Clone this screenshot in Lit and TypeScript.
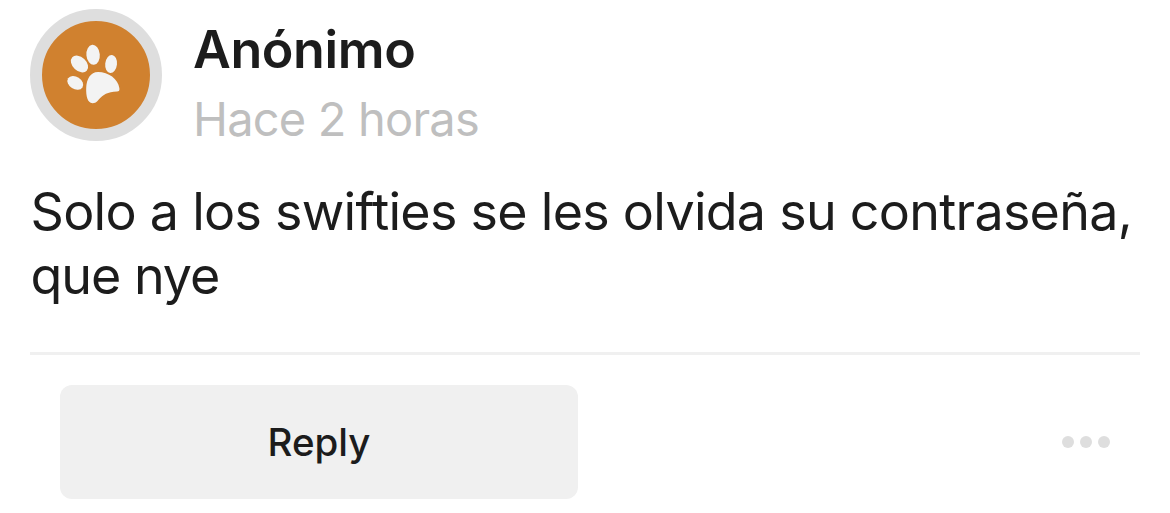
import { LitElement, html, css } from "lit";
import { customElement } from "lit/decorators.js";

@customElement("app-root")
export class AppRoot extends LitElement {
  static styles = css`
    :host { display: block; height: 513px; background: #fff; color: #1c1c1c; font-family: Inter, "Noto Sans", sans-serif; overflow: hidden; }
    .card { padding: 9px 30px 0; }
    .header { display: flex; gap: 31px; height: 132px; }
    .avatar { box-sizing: border-box; width: 132px; height: 132px; border: 12px solid #dedede; border-radius: 50%; background: #d0812f; flex: none; }
    .avatar svg { display: block; width: 108px; height: 108px; }
    .name { font-size: 52px; line-height: 58px; font-weight: 600; letter-spacing: -0.4px; margin-top: 12px; }
    .time { font-size: 47px; line-height: 58px; font-weight: 400; color: #bfbfbf; letter-spacing: -0.8px; margin-top: 11px; }
    .text { font-size: 52px; line-height: 64px; letter-spacing: -0.73px; margin-top: 39px; padding-left: 0.5px; white-space: nowrap; }
    .last { letter-spacing: -1.03px; }
    .footer { margin-top: 44px; border-top: 3px solid #f0f0f0; padding: 30px 30px 0; display: flex; justify-content: space-between; align-items: center; }
    .reply { width: 518px; height: 114px; border: 0; border-radius: 12px; background: #f0f0f0; color: #1c1c1c; font: 500 38.5px Inter, sans-serif; letter-spacing: 0; padding: 0; }
    .dots { display: flex; gap: 6px; border: 0; padding: 0; background: none; }
    .dot { width: 12px; height: 12px; border-radius: 50%; background: #dedede; }
  `;
  render() {
    return html`<article class="card">
      <header class="header">
        <div class="avatar"><svg viewBox="42 21 108 108" fill="#f3f3f3">
          <ellipse cx="93.100" cy="54.800" rx="6.700" ry="10" transform="rotate(-5 93.100 54.800)" />
          <ellipse cx="111.100" cy="64" rx="5.900" ry="9" transform="rotate(6 111.100 64)" />
          <ellipse cx="79.500" cy="64" rx="6.900" ry="9.900" transform="rotate(-47 79.500 64)" />
          <ellipse cx="75.300" cy="82.900" rx="6.200" ry="8.500" transform="rotate(-57 75.300 82.900)" />
          <path d="M86.200 88C86.600 79 90.500 72.100 98 72.100C108.500 72.100 118 79 119.400 88.200C119.700 90.500 119 91.300 117 91.400C107.500 92 103 94.500 99 99.200C96.500 102.200 95 103.200 92.400 103.200C87.500 103 85.900 96 86.200 88Z" />
        </svg></div>
        <div><div class="name"><span>Anónimo</span></div><div class="time"><span>Hace 2 horas</span></div></div>
      </header>
      <div class="text"><span>Solo a los swifties se les olvida su contraseña,</span><br /><span class="last">que nye</span></div>
      <footer class="footer"><button class="reply"><span>Reply</span></button>
        <button class="dots" aria-label="More"><i class="dot"></i><i class="dot"></i><i class="dot"></i></button></footer>
    </article>`;
  }
}
